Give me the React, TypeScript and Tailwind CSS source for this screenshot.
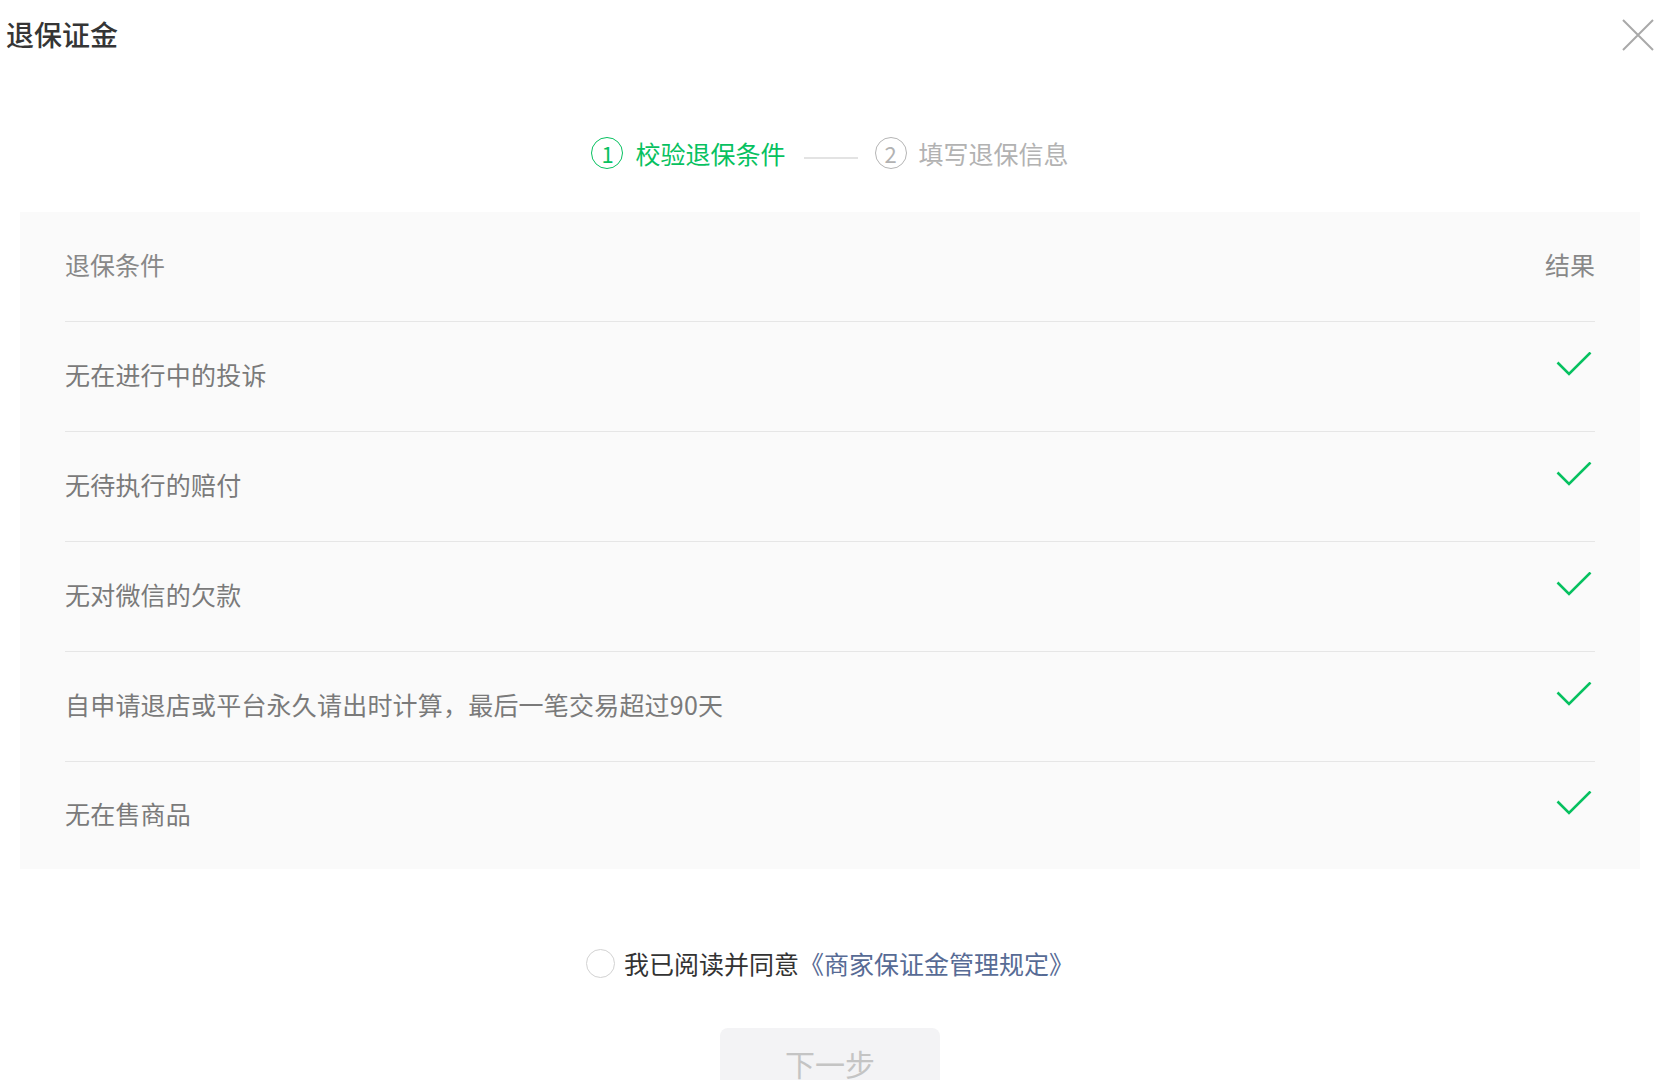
import React from "react";

const rows = [
  "无在进行中的投诉",
  "无待执行的赔付",
  "无对微信的欠款",
  "自申请退店或平台永久请出时计算，最后一笔交易超过90天",
  "无在售商品",
];

function Check() {
  return (
    <svg width="36" height="24" viewBox="0 0 36 24" className="mb-[21px] mr-[3px]">
      <path d="M1.5 10.5 L13 22 L34.5 0.5" fill="none" stroke="#07c160" strokeWidth="2.6" />
    </svg>
  );
}

export default function App() {
  return (
    <div className="relative w-[1680px] h-[1080px] overflow-hidden bg-white font-['Noto_Sans_CJK_SC','Noto_Sans',sans-serif]">
      <div className="w-[1660px]">
        <div className="pt-[14px] pl-[6px] text-[28px] leading-[40px] font-medium text-[#353535]">退保证金</div>

        <div className="mt-[83px] flex items-center justify-center h-[32px]">
          <div className="w-[32px] h-[32px] rounded-full border-[1.5px] border-[#07c160] flex items-center justify-center text-[22px] leading-none text-[#07c160]">1</div>
          <div className="ml-[12px] text-[25px] leading-[32px] text-[#07c160]">校验退保条件</div>
          <div className="ml-[18px] mr-[17px] mt-[10px] w-[54px] h-[2px] bg-[#e3e3e3]" />
          <div className="w-[32px] h-[32px] rounded-full border-[1.5px] border-[#b5b5b5] flex items-center justify-center text-[22px] leading-none text-[#b2b2b2]">2</div>
          <div className="ml-[12px] text-[25px] leading-[32px] text-[#b2b2b2]">填写退保信息</div>
        </div>

        <div className="mt-[43px] mx-[20px] bg-[#fafafa] px-[45px]">
          <div className="h-[109px] pb-[4px] flex items-center justify-between text-[25px] text-[#888888]">
            <span>退保条件</span>
            <span>结果</span>
          </div>
          {rows.map((r, i) => (
            <div
              key={i}
              className={
                "border-t border-[#e6e6e6] pb-[4px] flex items-center justify-between text-[25px] text-[#7a7a7a] " +
                (i === rows.length - 1 ? "h-[108px]" : "h-[110px]")
              }
            >
              <span className="tracking-[0.2px]">{r}</span>
              <Check />
            </div>
          ))}
        </div>

        <div className="mt-[79px] flex items-center justify-center h-[30px]">
          <div className="w-[29px] h-[29px] rounded-full border border-[#d2d2d2] bg-white" />
          <span className="ml-[9px] text-[25px] leading-[30px] text-[#333333]">我已阅读并同意</span>
          <span className="text-[25px] leading-[30px] text-[#576b95]">《商家保证金管理规定》</span>
        </div>

        <div className="mt-[50px] mx-auto w-[220px] h-[70px] rounded-[8px] bg-[#f3f3f5] flex items-center justify-center text-[30px] text-[#c4c4c4]">
          下一步
        </div>
      </div>

      <svg className="absolute top-[19px] left-[1622px]" width="32" height="32" viewBox="0 0 32 32">
        <path d="M1 1 L31 31 M31 1 L1 31" stroke="#a9a9a9" strokeWidth="2" fill="none" />
      </svg>
    </div>
  );
}
